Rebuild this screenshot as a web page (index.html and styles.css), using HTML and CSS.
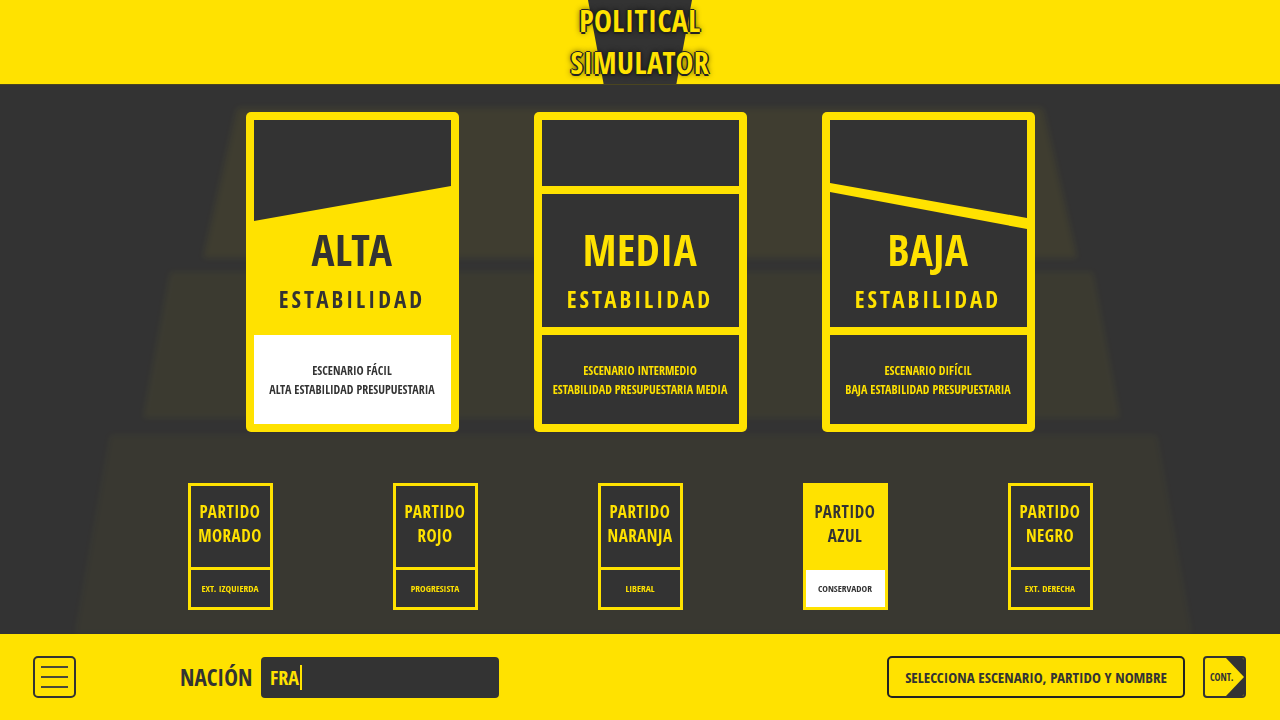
FILE: index.html
```html
<!DOCTYPE html>
<html lang="es">
<head>
  <meta charset="UTF-8" />
  <meta name="viewport" content="width=device-width, initial-scale=1.0" />
  <title>Political Simulator - Nueva partida</title>
  <link rel="stylesheet" href="styles.css">
</head>
<body>

  <header class="topbar">
    <div class="logo">
      <div class="logo-shield"></div>
      <h1 class="logo-text">POLITICAL<br>SIMULATOR</h1>
    </div>
  </header>

  <main class="stage">
    <svg class="podium" viewBox="0 0 1280 549" aria-hidden="true">
      <defs>
        <filter id="suave"><feGaussianBlur stdDeviation="3" /></filter>
      </defs>
      <g filter="url(#suave)" fill="#ffe200">
        <polygon points="237,23 1043,23 1077,173 203,173" opacity="0.06" />
        <polygon points="170,187 1093,187 1120,333 143,333" opacity="0.045" />
        <polygon points="110,350 1157,350 1192,549 75,549" opacity="0.03" />
      </g>
    </svg>

    <section class="scenarios">
      <article class="scenario is-active">
        <div class="scenario-top">
          <svg class="scenario-shape" viewBox="0 0 197 207" preserveAspectRatio="none">
            <polygon class="shape-dark" points="0,0 197,0 197,66 0,101" />
          </svg>
          <h2 class="scenario-title">ALTA</h2>
          <p class="scenario-sub">ESTABILIDAD</p>
        </div>
        <div class="scenario-desc">
          <span>ESCENARIO FÁCIL</span>
          <span>ALTA ESTABILIDAD PRESUPUESTARIA</span>
        </div>
      </article>

      <article class="scenario">
        <div class="scenario-top">
          <svg class="scenario-shape" viewBox="0 0 197 207" preserveAspectRatio="none">
            <rect class="shape-light" x="0" y="66" width="197" height="8" />
          </svg>
          <h2 class="scenario-title">MEDIA</h2>
          <p class="scenario-sub">ESTABILIDAD</p>
        </div>
        <div class="scenario-desc">
          <span>ESCENARIO INTERMEDIO</span>
          <span>ESTABILIDAD PRESUPUESTARIA MEDIA</span>
        </div>
      </article>

      <article class="scenario">
        <div class="scenario-top">
          <svg class="scenario-shape" viewBox="0 0 197 207" preserveAspectRatio="none">
            <polygon class="shape-light" points="0,63 197,98 197,109 0,72" />
          </svg>
          <h2 class="scenario-title">BAJA</h2>
          <p class="scenario-sub">ESTABILIDAD</p>
        </div>
        <div class="scenario-desc">
          <span>ESCENARIO DIFÍCIL</span>
          <span>BAJA ESTABILIDAD PRESUPUESTARIA</span>
        </div>
      </article>
    </section>

    <section class="parties">
      <article class="party">
        <div class="party-name">PARTIDO<br>MORADO</div>
        <div class="party-tag">EXT. IZQUIERDA</div>
      </article>
      <article class="party">
        <div class="party-name">PARTIDO<br>ROJO</div>
        <div class="party-tag">PROGRESISTA</div>
      </article>
      <article class="party">
        <div class="party-name">PARTIDO<br>NARANJA</div>
        <div class="party-tag">LIBERAL</div>
      </article>
      <article class="party is-active">
        <div class="party-name">PARTIDO<br>AZUL</div>
        <div class="party-tag">CONSERVADOR</div>
      </article>
      <article class="party">
        <div class="party-name">PARTIDO<br>NEGRO</div>
        <div class="party-tag">EXT. DERECHA</div>
      </article>
    </section>
  </main>

  <footer class="bottombar">
    <button class="menu-btn" type="button"><span></span><span></span><span></span></button>

    <div class="nation">
      <span class="nation-label">NACIÓN</span>
      <div class="nation-input">FRA<span class="caret"></span></div>
    </div>

    <button class="hint-btn" type="button">SELECCIONA ESCENARIO, PARTIDO Y NOMBRE</button>

    <button class="next-btn" type="button">
      <span>CONT.</span>
      <svg class="next-arrow" viewBox="0 0 39 38" preserveAspectRatio="none">
        <polygon points="21,0 39,0 39,19" />
        <polygon points="21,38 39,38 39,19" />
      </svg>
    </button>
  </footer>

</body>
</html>
```
FILE: styles.css
```css
* {
  box-sizing: border-box;
}

body {
  margin: 0;
  width: 1280px;
  height: 720px;
  overflow: hidden;
  display: flex;
  flex-direction: column;
  font-family: "Open Sans Condensed", "Roboto Condensed", sans-serif;
  font-weight: 700;
  background: #333333;
  color: #333333;
}

button {
  font: inherit;
  cursor: pointer;
}

/* cabecera */

.topbar {
  height: 85px;
  background: #ffe200;
  display: flex;
  justify-content: center;
  border-bottom: 1px solid #4a4520;
}

.logo {
  position: relative;
  width: 180px;
}

.logo-shield {
  position: absolute;
  top: 0;
  left: 38px;
  width: 104px;
  height: 84px;
  background: #333333;
  clip-path: polygon(0 0, 100% 0, 85% 100%, 15% 100%);
}

.logo-text {
  position: relative;
  margin: 0;
  font-size: 30px;
  line-height: 42px;
  text-align: center;
  letter-spacing: 0.5px;
  white-space: nowrap;
  color: #ffe200;
  text-shadow:
    -1.5px 0 0 #222, 1.5px 0 0 #222, 0 -1.5px 0 #222, 0 1.5px 0 #222,
    0 0 6px rgba(0, 0, 0, 0.8);
}

/* zona central */

.stage {
  position: relative;
  height: 549px;
  display: flex;
  flex-direction: column;
  align-items: center;
  padding-top: 27px;
}

.podium {
  position: absolute;
  top: 0;
  left: 0;
  width: 1280px;
  height: 549px;
}

.scenarios {
  position: relative;
  display: flex;
  gap: 75px;
}

.scenario {
  width: 213px;
  height: 320px;
  padding: 8px;
  display: flex;
  flex-direction: column;
  gap: 8px;
  background: #ffe200;
  border-radius: 5px;
}

.scenario-top {
  position: relative;
  height: 207px;
  padding-top: 108px;
  text-align: center;
  background: #333333;
  color: #ffe200;
}

.scenario-shape {
  position: absolute;
  top: 0;
  left: 0;
  width: 100%;
  height: 100%;
}

.shape-dark {
  fill: #333333;
}

.shape-light {
  fill: #ffe200;
}

.scenario-title {
  position: relative;
  margin: 0;
  font-size: 43px;
  line-height: 1;
  letter-spacing: 0.5px;
}

.scenario-sub {
  position: relative;
  margin: 17px 0 0;
  font-size: 23px;
  line-height: 1;
  letter-spacing: 3px;
}

.scenario-desc {
  flex: 1;
  display: flex;
  flex-direction: column;
  align-items: center;
  justify-content: center;
  font-size: 12px;
  line-height: 19px;
  font-weight: 600;
  white-space: nowrap;
  background: #333333;
  color: #ffe200;
}

.scenario.is-active .scenario-top {
  background: #ffe200;
  color: #333333;
}

.scenario.is-active .scenario-desc {
  background: #ffffff;
  color: #333333;
  font-weight: 500;
}

.parties {
  position: relative;
  display: flex;
  gap: 120px;
  margin-top: 51px;
}

.party {
  width: 85px;
  height: 127px;
  display: flex;
  flex-direction: column;
  gap: 3px;
  border: 3px solid #ffe200;
  background: #ffe200;
  text-align: center;
}

.party-name {
  flex: 1;
  display: flex;
  align-items: center;
  justify-content: center;
  padding-bottom: 5px;
  font-size: 17px;
  line-height: 24px;
  letter-spacing: 0.5px;
  background: #333333;
  color: #ffe200;
}

.party-tag {
  height: 37px;
  display: flex;
  align-items: center;
  justify-content: center;
  font-size: 9.5px;
  white-space: nowrap;
  background: #333333;
  color: #ffe200;
}

.party.is-active .party-name {
  background: #ffe200;
  color: #333333;
}

.party.is-active .party-tag {
  background: #ffffff;
  color: #333333;
  font-weight: 500;
}

/* barra inferior */

.bottombar {
  height: 86px;
  display: flex;
  align-items: center;
  padding: 0 34px 0 33px;
  background: #ffe200;
}

.menu-btn {
  width: 43px;
  height: 42px;
  padding: 0;
  display: flex;
  flex-direction: column;
  align-items: center;
  justify-content: center;
  gap: 8px;
  border: 2px solid #333333;
  border-radius: 5px;
  background: transparent;
}

.menu-btn span {
  width: 27px;
  height: 2px;
  background: #4a4a3a;
}

.nation {
  display: flex;
  align-items: center;
  margin-left: 104px;
}

.nation-label {
  width: 81px;
  font-size: 23px;
}

.nation-input {
  width: 238px;
  height: 41px;
  display: flex;
  align-items: center;
  padding-left: 9px;
  font-size: 20px;
  color: #ffe200;
  background: #333333;
  border-radius: 4px;
}

.caret {
  width: 2px;
  height: 25px;
  margin-left: 1px;
  background: #ffe200;
}

.hint-btn {
  margin-left: auto;
  width: 298px;
  height: 42px;
  padding: 0;
  font-size: 15px;
  white-space: nowrap;
  color: #333333;
  background: transparent;
  border: 2px solid #222222;
  border-radius: 5px;
}

.next-btn {
  position: relative;
  margin-left: 18px;
  width: 43px;
  height: 42px;
  padding: 0 0 0 5px;
  display: flex;
  align-items: center;
  font-size: 10px;
  color: #333333;
  background: #ffe200;
  border: 2px solid #333333;
  border-radius: 4px;
  overflow: hidden;
}

.next-arrow {
  position: absolute;
  top: 0;
  right: 0;
  width: 39px;
  height: 38px;
  fill: #333333;
}
```
